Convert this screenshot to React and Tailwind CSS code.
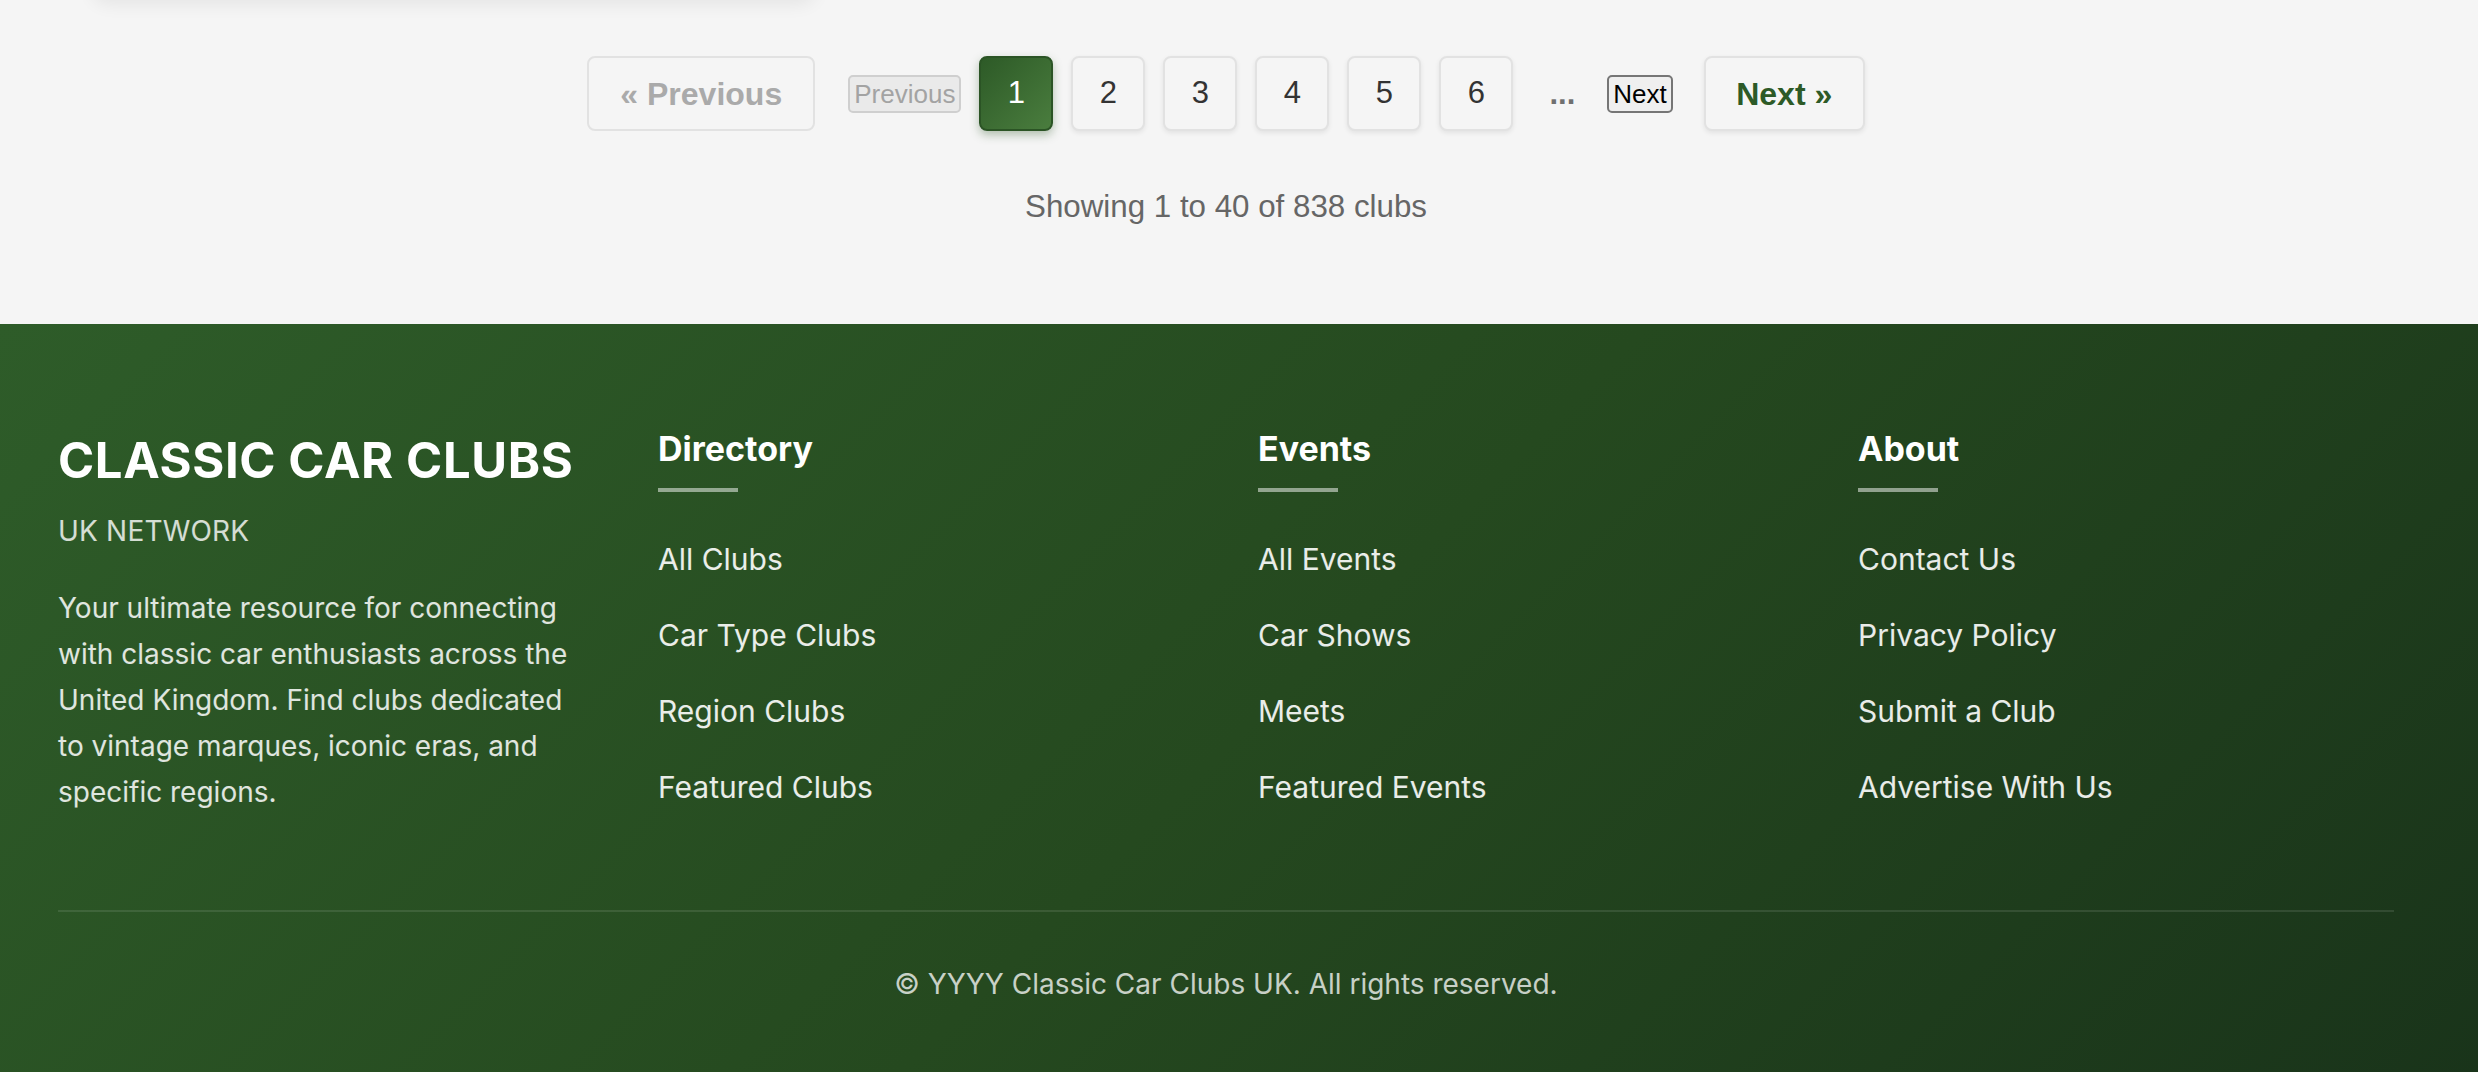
import React from 'react';

const pages = [1, 2, 3, 4, 5, 6];

const footerColumns = [
  { title: 'Directory', links: ['All Clubs', 'Car Type Clubs', 'Region Clubs', 'Featured Clubs'] },
  { title: 'Events', links: ['All Events', 'Car Shows', 'Meets', 'Featured Events'] },
  { title: 'About', links: ['Contact Us', 'Privacy Policy', 'Submit a Club', 'Advertise With Us'] },
];

function Pagination() {
  return (
    <nav className="mt-[56px] flex items-center justify-center font-['Liberation_Sans',Arial,sans-serif]">
      <span className="flex h-[75px] w-[228px] items-center justify-center rounded-[8px] border-2 border-[#e2e2e2] text-[32px] font-bold text-[#aaaaaa]">
        « Previous
      </span>
      <button
        disabled
        className="ml-[33px] h-[38px] rounded-[5px] border-2 border-[#cfcfcf] bg-[#eaeaea] px-[4px] text-[26px] leading-[30px] text-[#a3a3a3]"
      >
        Previous
      </button>
      {pages.map(p => (
        <a
          key={p}
          href="#"
          className={
            p === 1
              ? 'ml-[18px] flex h-[75px] w-[74px] items-center justify-center rounded-[8px] border-2 border-[#2b5425] bg-[linear-gradient(135deg,#2d5a27,#4a7d3e)] text-[31px] text-white shadow-[0_4px_10px_rgba(45,90,39,0.35)]'
              : 'ml-[18px] flex h-[75px] w-[74px] items-center justify-center rounded-[8px] border-2 border-[#e2e2e2] bg-[#f5f5f5] text-[31px] text-[#333333] shadow-[0_2px_5px_rgba(0,0,0,0.08)]'
          }
        >
          {p}
        </a>
      ))}
      <span className="ml-[36px] text-[31px] font-bold leading-[36px] text-[#707070]">...</span>
      <button className="ml-[32px] h-[38px] rounded-[5px] border-2 border-[#767676] bg-[#efefef] px-[4px] text-[26px] leading-[30px] text-black">
        Next
      </button>
      <a
        href="#"
        className="ml-[31px] flex h-[75px] w-[161px] items-center justify-center rounded-[8px] border-2 border-[#e2e2e2] bg-[#f5f5f5] text-[32px] font-bold text-[#2d5a27] shadow-[0_2px_5px_rgba(0,0,0,0.08)]"
      >
        Next »
      </a>
    </nav>
  );
}

export default function App() {
  return (
    <div className="min-h-screen overflow-hidden bg-[#f5f5f5]">
      <section className="pr-[26px] pb-[99px]">
        {/* last row of the club grid, only its shadow is visible */}
        <div className="mx-auto grid w-[2268px] grid-cols-3 gap-[48px]">
          <div className="-mt-[44px] h-[42px] rounded-b-[16px] bg-white shadow-[0_6px_18px_rgba(0,0,0,0.07)]" />
        </div>

        <Pagination />

        <p className="mt-[58px] text-center font-['Liberation_Sans',Arial,sans-serif] text-[31.3px] leading-[36px] text-[#666666]">
          Showing 1 to 40 of 838 clubs
        </p>
      </section>

      <footer className="bg-[linear-gradient(135deg,#2e5c29_0%,#25491f_50%,#19331a_100%)] pl-[58px] pr-[84px] pt-[103px] pb-[140px] font-['Inter',sans-serif] text-white">
        <div className="grid grid-cols-4 gap-[64px]">
          <div>
            <h2 className="mt-[6px] text-[49px] font-bold leading-[56px] tracking-[0.6px]">CLASSIC CAR CLUBS</h2>
            <p className="mt-[25px] text-[28px] leading-[34px] tracking-[0.2px] text-white/80">UK NETWORK</p>
            <p className="mt-[37px] text-[28px] leading-[46px] text-white/85">
              Your ultimate resource for connecting with classic car enthusiasts across the United Kingdom. Find clubs dedicated to vintage marques, iconic eras, and specific regions.
            </p>
          </div>
          {footerColumns.map(col => (
            <div key={col.title}>
              <h3 className="mt-[1px] text-[34px] font-bold leading-[42px]">{col.title}</h3>
              <div className="mt-[18px] h-[4px] w-[80px] bg-white/50" />
              <ul className="mt-[47px] flex flex-col gap-[36px]">
                {col.links.map(link => (
                  <li key={link}>
                    <a href="#" className="text-[30px] leading-[40px] text-white/90">{link}</a>
                  </li>
                ))}
              </ul>
            </div>
          ))}
        </div>

        <div className="mt-[95px] border-t-2 border-white/10 pt-[54px] text-center text-[28px] leading-[36px] text-white/75">
          © YYYY Classic Car Clubs UK. All rights reserved.
        </div>
      </footer>
    </div>
  );
}
